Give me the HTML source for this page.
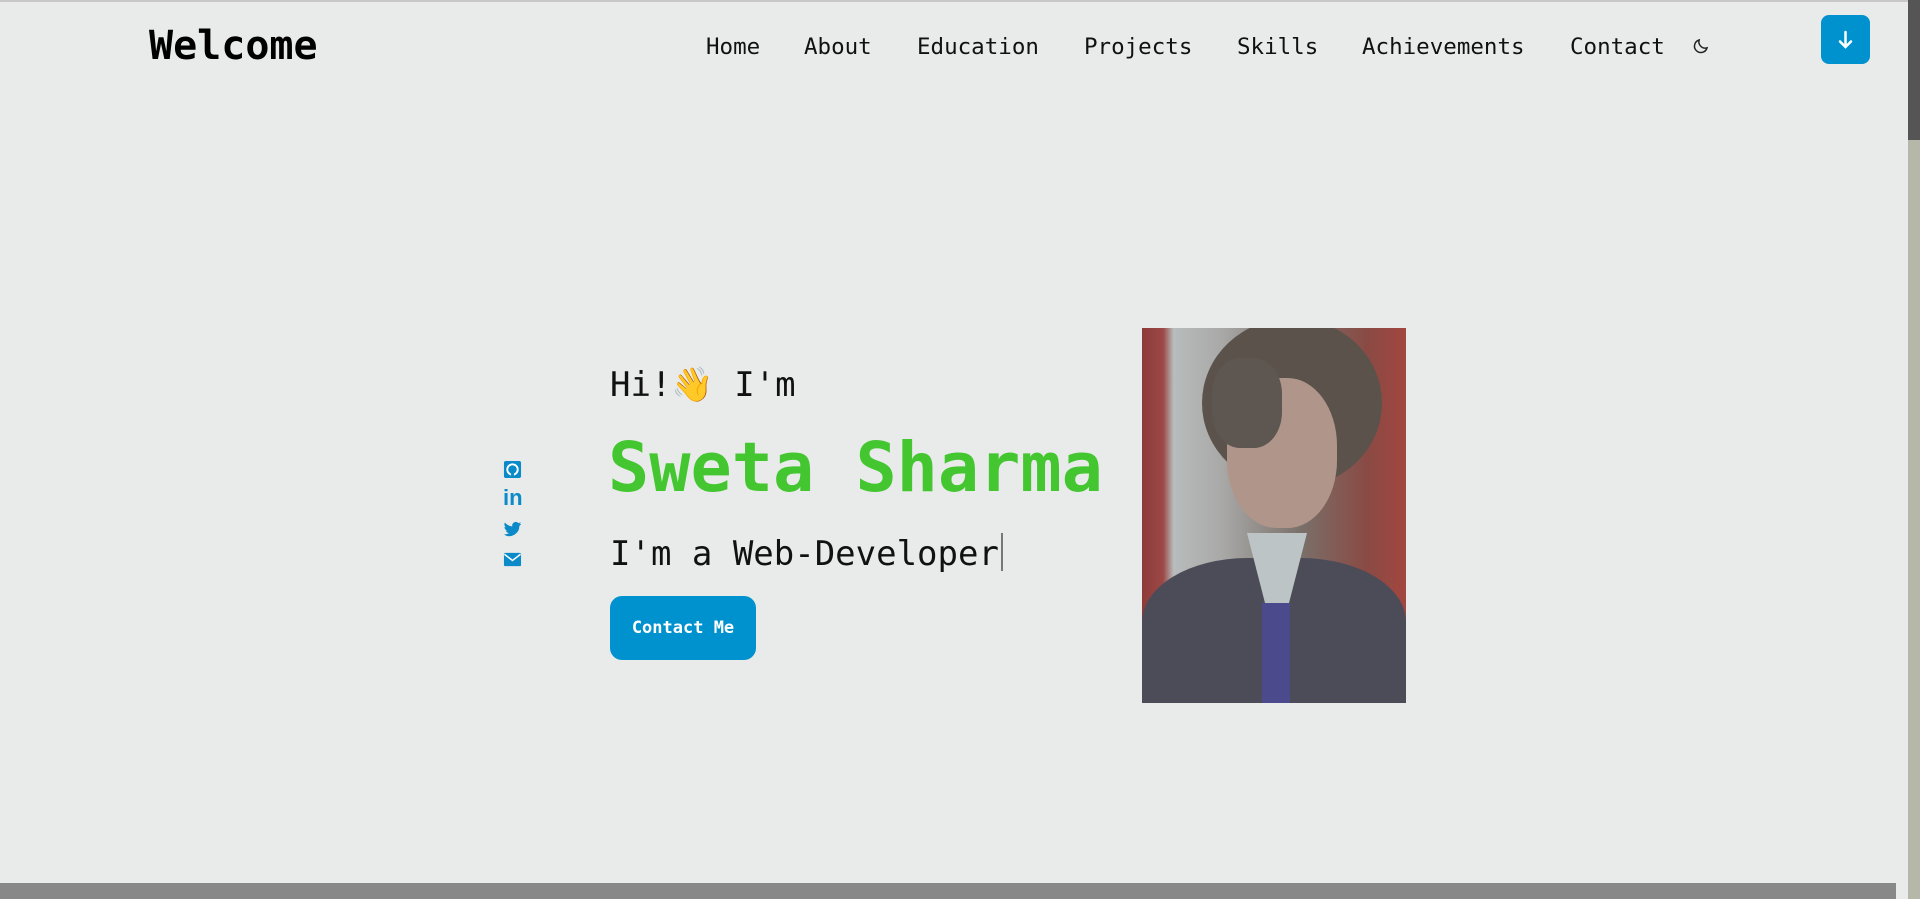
<!DOCTYPE html>
<html><head><meta charset="utf-8"><style>
*{margin:0;padding:0;box-sizing:border-box}
html,body{width:1920px;height:899px;overflow:hidden;background:#e9ebea;font-family:"DejaVu Sans Mono","Liberation Mono",monospace;color:#111}
.top{position:absolute;left:0;top:0;width:1908px;height:2px;background:#c8c8c8}
.logo{position:absolute;left:149px;top:23px;font-size:40px;font-weight:bold;color:#000}
.nav{position:absolute;top:34px;font-size:22.5px;color:#111}
.dl{position:absolute;left:1821px;top:15px;width:49px;height:49px;background:#0091cf;border-radius:8px}
.sb{position:absolute;left:1908px;top:0;width:12px;height:899px;background:#b5b7a8}
.thumb{position:absolute;left:1908px;top:0;width:12px;height:140px;background:#555}
.bb{position:absolute;left:0;top:883px;width:1896px;height:16px;background:#888}
.hi{position:absolute;left:610px;top:365px;font-size:34px}
.name{position:absolute;left:608px;top:428px;font-size:68.5px;font-weight:bold;color:#44c631}
.role{position:absolute;left:610px;top:533px;font-size:34px}
.cur{display:inline-block;width:2px;height:38px;background:#777;vertical-align:-6px;margin-left:2px}
.btn{position:absolute;left:610px;top:596px;width:146px;height:64px;background:#0091cf;border-radius:12px;color:#fff;font-size:17px;font-weight:bold;text-align:center;line-height:64px}
.ic{position:absolute;left:503px;width:19px;height:19px}
.photo{position:absolute;left:1142px;top:328px;width:264px;height:375px;overflow:hidden;
background:linear-gradient(90deg,#8d3a38 0%,#9b4846 8%,#b8bcbc 12%,#a9a9a8 30%,#7a706a 60%,#8a4a44 85%,#a24640 100%)}
</style></head><body>
<div class="top"></div>
<div class="logo">Welcome</div>
<div class="nav" style="left:706px">Home</div>
<div class="nav" style="left:804px">About</div>
<div class="nav" style="left:917px">Education</div>
<div class="nav" style="left:1084px">Projects</div>
<div class="nav" style="left:1237px">Skills</div>
<div class="nav" style="left:1362px">Achievements</div>
<div class="nav" style="left:1570px">Contact</div>
<svg style="position:absolute;left:1692px;top:37px" width="18" height="18" viewBox="0 0 24 24" fill="none" stroke="#222" stroke-width="2"><path d="M20 14.5A8.5 8.5 0 0 1 9.5 4 8.5 8.5 0 1 0 20 14.5z"/></svg>
<div class="dl"><svg width="49" height="49" viewBox="0 0 49 49" fill="none" stroke="#fff" stroke-width="2.5" stroke-linecap="round"><path d="M24.5 17v15M19 26.5l5.5 5.5 5.5-5.5"/></svg></div>
<div class="sb"></div><div class="thumb"></div>
<div class="bb"></div>

<svg class="ic" style="top:460px" viewBox="0 0 20 20"><rect x="1" y="1" width="18" height="18" rx="2" fill="#0a8ac8"/><circle cx="10" cy="10" r="5.5" fill="none" stroke="#fff" stroke-width="2"/><rect x="8.5" y="13" width="3" height="5" fill="#0a8ac8"/></svg>
<div class="ic" style="top:487px;color:#0a8ac8;font-family:'Liberation Sans',sans-serif;font-weight:bold;font-size:22px;line-height:22px">in</div>
<svg class="ic" style="top:520px" viewBox="0 0 24 24"><path fill="#0a8ac8" d="M23 4.6c-.8.4-1.7.6-2.6.7.9-.6 1.6-1.4 2-2.5-.9.5-1.9.9-2.9 1.1A4.5 4.5 0 0 0 11.8 8C8 7.8 4.7 6 2.4 3.2c-1.3 2.300-.4 4.9 1.4 6.1-.7 0-1.4-.2-2-.6 0 2.2 1.6 4.1 3.6 4.5-.7.2-1.4.2-2 .1.6 1.8 2.3 3.1 4.2 3.1A9 9 0 0 1 1 18.3 12.8 12.8 0 0 0 20.7 7.4c.9-.6 1.700-1.5 2.300-2.800z"/></svg>
<svg class="ic" style="top:550px" viewBox="0 0 20 20"><rect x="1" y="3" width="18" height="14" rx="1.5" fill="#0a8ac8"/><path d="M1.5 4.5 10 11l8.5-6.5" fill="none" stroke="#fff" stroke-width="1.6"/></svg>

<div class="hi">Hi!<span style="font-family:'Noto Color Emoji',sans-serif">👋</span> I'm</div>
<div class="name">Sweta Sharma</div>
<div class="role">I'm a Web-Developer<span class="cur"></span></div>
<div class="btn">Contact Me</div>

<div class="photo">
<div style="position:absolute;left:60px;top:-10px;width:180px;height:170px;border-radius:50%;background:#5b524c"></div>
<div style="position:absolute;left:85px;top:50px;width:110px;height:150px;border-radius:45%;background:#b0968a"></div>
<div style="position:absolute;left:70px;top:30px;width:70px;height:90px;border-radius:40%;background:#5e5650"></div>
<div style="position:absolute;left:0;top:230px;width:264px;height:160px;border-radius:40% 40% 0 0;background:#4c4c58"></div>
<div style="position:absolute;left:105px;top:205px;width:60px;height:70px;background:#bcc4c6;clip-path:polygon(0 0,100% 0,70% 100%,30% 100%)"></div>
<div style="position:absolute;left:120px;top:275px;width:28px;height:110px;background:#4a4a8c"></div>
</div>
</body></html>
